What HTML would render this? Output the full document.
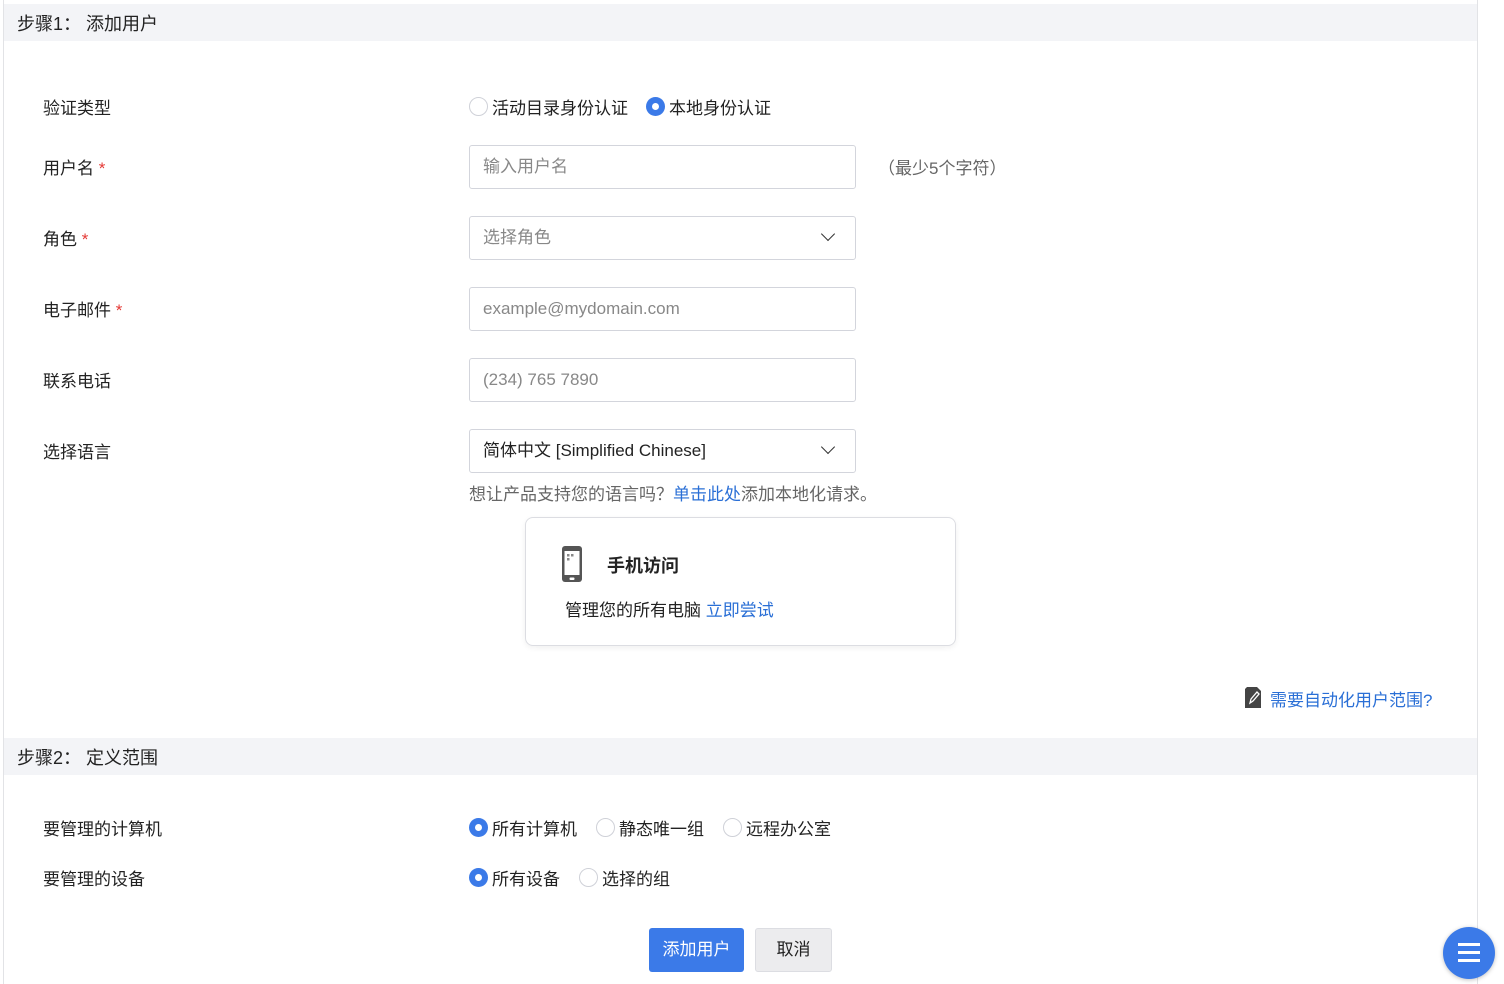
<!DOCTYPE html>
<html><head><meta charset="utf-8"><style>
*{box-sizing:border-box;margin:0;padding:0}
body{width:1504px;height:984px;background:#fff;font-family:"Liberation Sans","Noto Sans CJK SC",sans-serif;font-size:17px;color:#222;position:relative;overflow:hidden}
.a{position:absolute;white-space:nowrap}
.wrap{position:absolute;left:3px;top:0;width:1475px;height:984px;border-left:1px solid #e2e3e6;border-right:1px solid #e2e3e6}
.band{position:absolute;left:4px;width:1473px;height:37px;background:#f3f4f7}
.band span{position:absolute;left:13px;top:6px;font-size:18px}
.lbl{left:43px}
.req{color:#e53935}
.inp{position:absolute;left:469px;width:387px;height:44px;border:1px solid #d3d5dc;border-radius:3px;padding-left:13px;line-height:42px;color:#888;font-size:17px}
.inp.v{color:#222}
.chev{position:absolute;right:22px;top:12px;width:10px;height:10px;border-right:1.5px solid #333;border-bottom:1.5px solid #333;transform:rotate(45deg)}
.r{position:absolute;width:19px;height:19px;border-radius:50%;border:1.5px solid #cfd1d8;background:#fff}
.r.on{border:none;background:#3b7ae8}
.r.on:after{content:"";position:absolute;left:6px;top:6px;width:7px;height:7px;border-radius:50%;background:#fff}
.blue{color:#2a6fd6}
</style></head><body>
<div class="wrap"></div>
<div class="band" style="top:4px"><span>步骤1： 添加用户</span></div>
<div class="band" style="top:738px"><span>步骤2： 定义范围</span></div>

<div class="a lbl" style="top:94px">验证类型</div>
<div class="r" style="left:469px;top:97px"></div><div class="a" style="left:492px;top:94px">活动目录身份认证</div>
<div class="r on" style="left:646px;top:97px"></div><div class="a" style="left:669px;top:94px">本地身份认证</div>

<div class="a lbl" style="top:154px">用户名 <span class="req">*</span></div>
<div class="inp" style="top:145px">输入用户名</div>
<div class="a" style="left:878px;top:154px;color:#666">（最少5个字符）</div>

<div class="a lbl" style="top:225px">角色 <span class="req">*</span></div>
<div class="inp" style="top:216px">选择角色<div class="chev"></div></div>

<div class="a lbl" style="top:296px">电子邮件 <span class="req">*</span></div>
<div class="inp" style="top:287px">example@mydomain.com</div>

<div class="a lbl" style="top:367px">联系电话</div>
<div class="inp" style="top:358px">(234) 765 7890</div>

<div class="a lbl" style="top:438px">选择语言</div>
<div class="inp v" style="top:429px">简体中文 [Simplified Chinese]<div class="chev"></div></div>
<div class="a" style="left:469px;top:480px;color:#666">想让产品支持您的语言吗？<span class="blue">单击此处</span>添加本地化请求。</div>

<div class="a" style="left:525px;top:517px;width:431px;height:129px;border:1px solid #dcdde2;border-radius:8px;box-shadow:0 2px 6px rgba(0,0,0,.06)">
<svg class="a" style="left:35px;top:27px" width="22" height="38" viewBox="0 0 22 38"><rect x="1" y="1" width="20" height="36" rx="3" fill="#555"/><rect x="3.5" y="6" width="15" height="24" fill="#fff"/><rect x="6" y="9" width="2.5" height="2.5" fill="#888"/><rect x="10" y="9" width="2.5" height="2.5" fill="#888"/><rect x="6" y="13" width="2.5" height="2.5" fill="#888"/><rect x="8.5" y="32.5" width="5" height="2.5" rx="1" fill="#fff"/></svg>
<div class="a" style="left:81px;top:34px;font-size:18px;font-weight:bold">手机访问</div>
<div class="a" style="left:39px;top:78px">管理您的所有电脑 <span class="blue">立即尝试</span></div>
</div>

<svg class="a" style="left:1244px;top:687px" width="18" height="21" viewBox="0 0 18 21"><path d="M3 0h10l4 4v17H1V2z" fill="#444"/><path d="M6 16l1-4 6-7 2 2-6 7z" fill="none" stroke="#fff" stroke-width="1.3"/></svg>
<div class="a blue" style="left:1270px;top:686px">需要自动化用户范围?</div>

<div class="a lbl" style="top:815px">要管理的计算机</div>
<div class="r on" style="left:469px;top:818px"></div><div class="a" style="left:492px;top:815px">所有计算机</div>
<div class="r" style="left:596px;top:818px"></div><div class="a" style="left:619px;top:815px">静态唯一组</div>
<div class="r" style="left:723px;top:818px"></div><div class="a" style="left:746px;top:815px">远程办公室</div>

<div class="a lbl" style="top:865px">要管理的设备</div>
<div class="r on" style="left:469px;top:868px"></div><div class="a" style="left:492px;top:865px">所有设备</div>
<div class="r" style="left:579px;top:868px"></div><div class="a" style="left:602px;top:865px">选择的组</div>

<div class="a" style="left:649px;top:928px;width:95px;height:44px;background:#3b7ae8;border-radius:3px;color:#fff;text-align:center;line-height:44px">添加用户</div>
<div class="a" style="left:755px;top:928px;width:77px;height:44px;background:#ececee;border:1px solid #dcdde2;border-radius:3px;text-align:center;line-height:42px">取消</div>

<div class="a" style="left:1443px;top:927px;width:52px;height:52px;border-radius:50%;background:#3b7ae8;box-shadow:0 1px 4px rgba(0,0,0,.25)">
<div class="a" style="left:15px;top:16px;width:22px;height:2.5px;background:#fff"></div>
<div class="a" style="left:15px;top:24px;width:22px;height:2.5px;background:#fff"></div>
<div class="a" style="left:15px;top:32px;width:22px;height:2.5px;background:#fff"></div>
</div>
</body></html>
